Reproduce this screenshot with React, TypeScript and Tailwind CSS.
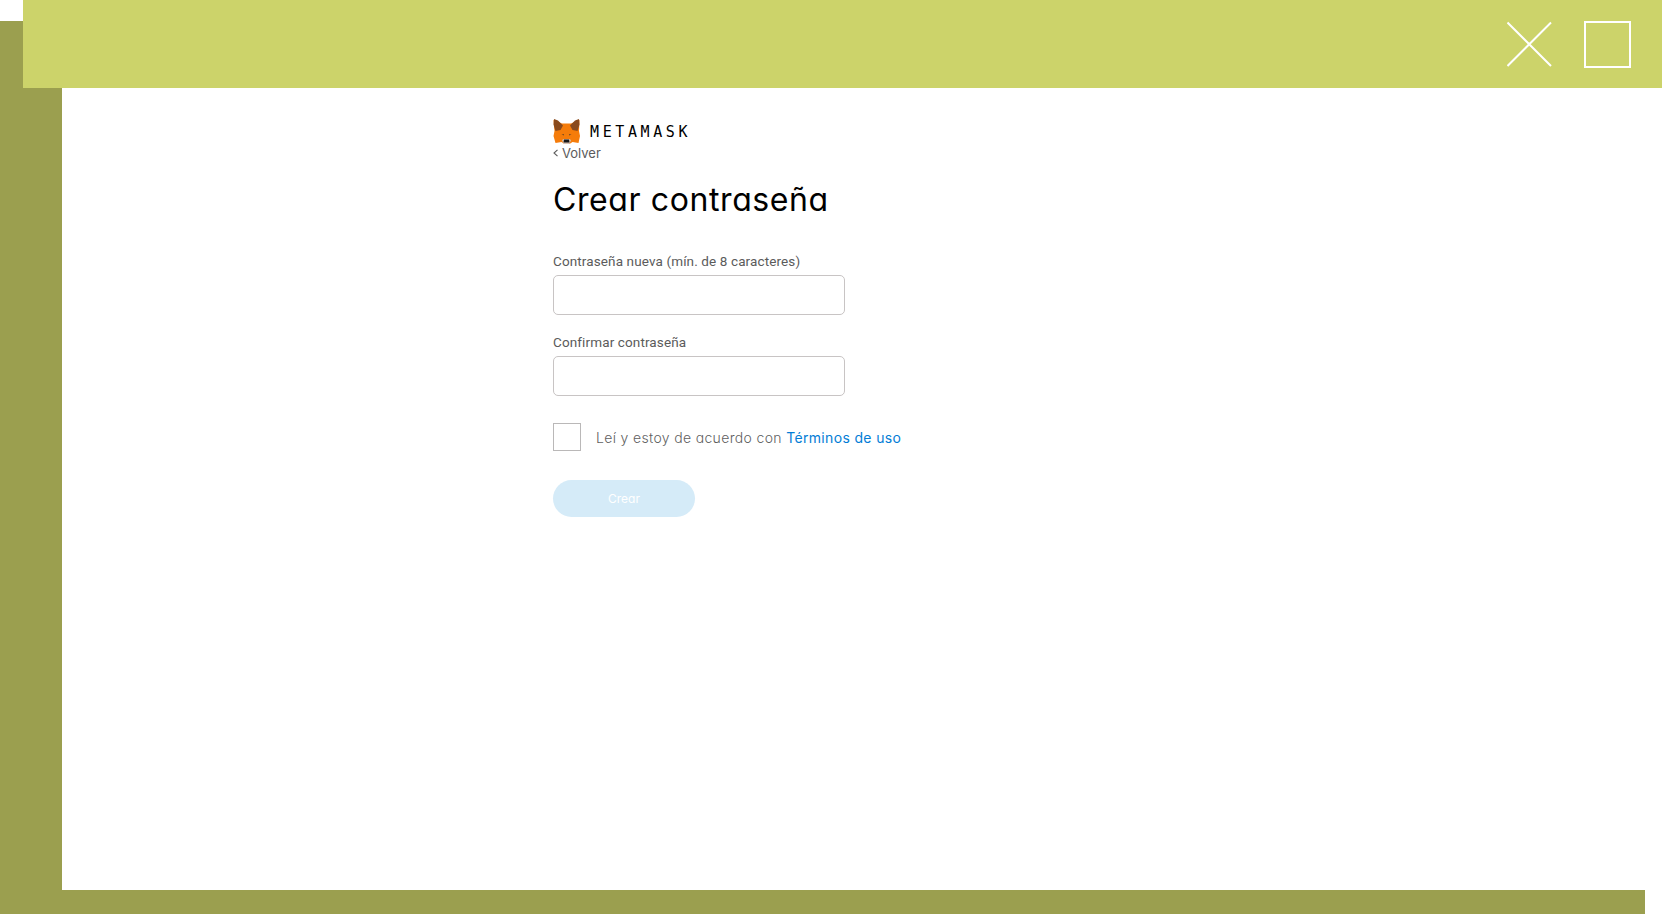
const geo = "font-['Inter',sans-serif] [font-feature-settings:'cv11']";

function Fox() {
  return (
    <svg width="28" height="26" viewBox="0 0 28 26" className="shrink-0">
      <path fill="#f57c0a" d="M.500 1 9 4.500h9L26.500 1l-.5 11 1 5-1.500 7-6-1-3 2h-5l-3-2-6 1L.500 17l1-5z" />
      <path fill="#8a4a1c" d="M1 0 5 1.500l5 5L7.500 11 2.500 12 .500 5.500zM26 0l-4 1.500-5 5 2.500 4.500 5 1L26.500 5.500z" />
      <path fill="#d7c1b3" d="m9 21 2-1h5l2 1-1.500 4h-6z" />
      <path fill="#161616" d="M11 20.500h5l.500 3h-6z" />
      <path fill="#7a4a20" d="m8.500 15.500 2.500-.5v1.500zM18.500 15.500l-2.500-.5v1.500z" />
    </svg>
  );
}

function Field({ label }: { label: string }) {
  return (
    <label className="block">
      <span className="block h-5 font-['Roboto',sans-serif] text-[13.5px] leading-5 tracking-[0.12px] whitespace-nowrap text-[#5b5b5b]">{label}</span>
      <input type="password" className="mt-[4px] block h-10 w-[292px] rounded-[5px] border border-[#c8c4c4] bg-white px-3 outline-none" />
    </label>
  );
}

export default function App() {
  return (
    <div className="flex h-[914px] w-[1671px] flex-col overflow-hidden bg-white">
      <div className="flex h-[88px]">
        <div className="w-[23px] pt-[21px]">
          <div className="h-[67px] bg-[#9b9f4f]" />
        </div>
        <header className="flex w-[1639px] items-start justify-end gap-[32px] bg-[#ccd36a] pt-[21px] pr-[31px]">
          <svg width="45" height="46" viewBox="0 0 45 46" stroke="#fff" strokeWidth="2" fill="none">
            <path d="M.5 1.500 44 45M44 1.500.5 45" />
          </svg>
          <div className="h-[47px] w-[47px] border-2 border-white" />
        </header>
      </div>
      <div className="flex h-[802px]">
        <div className="w-[62px] bg-[#9b9f4f]" />
        <main className={`flex flex-col items-start pt-[31px] pl-[491px] ${geo}`}>
          <div className="flex h-[25px] items-center gap-[9px]">
            <Fox />
            <span className="font-['DejaVu_Sans_Mono',monospace] text-[15px] leading-5 tracking-[3.6px] text-black">METAMASK</span>
          </div>
          <button className="flex h-[18px] items-center gap-[4px] text-[13px] leading-[18px] text-[#5b5b5b]">
            <svg width="5" height="8" viewBox="0 0 5 8" fill="none" stroke="#5b5b5b" strokeWidth="1.1">
              <path d="M4.500.8 1 4l3.500 3.200" />
            </svg>
            Volver
          </button>
          <h1 className="mt-[18px] h-10 text-[32px] leading-10 tracking-[0.6px] whitespace-nowrap text-black">Crear contraseña</h1>
          <form className="mt-[31px] flex flex-col items-start">
            <Field label="Contraseña nueva (mín. de 8 caracteres)" />
            <div className="h-[17px]" />
            <Field label="Confirmar contraseña" />
            <div className="mt-[27px] flex h-7 items-center gap-[15px]">
              <span className="h-7 w-7 border border-[#bab8b8]" />
              <span className="pt-[2px] text-[14px] leading-6 font-light tracking-[0.34px] whitespace-nowrap text-[#5f5f5f]">
                Leí y estoy de acuerdo con <a className="font-normal text-[#037dd6]">Términos de uso</a>
              </span>
            </div>
            <button type="button" className="mt-[29px] h-[37px] w-[142px] rounded-full bg-[#d5ebf8] text-[12px] text-white">Crear</button>
          </form>
        </main>
      </div>
      <div className="h-6 w-[1645px] bg-[#9b9f4f]" />
    </div>
  );
}
